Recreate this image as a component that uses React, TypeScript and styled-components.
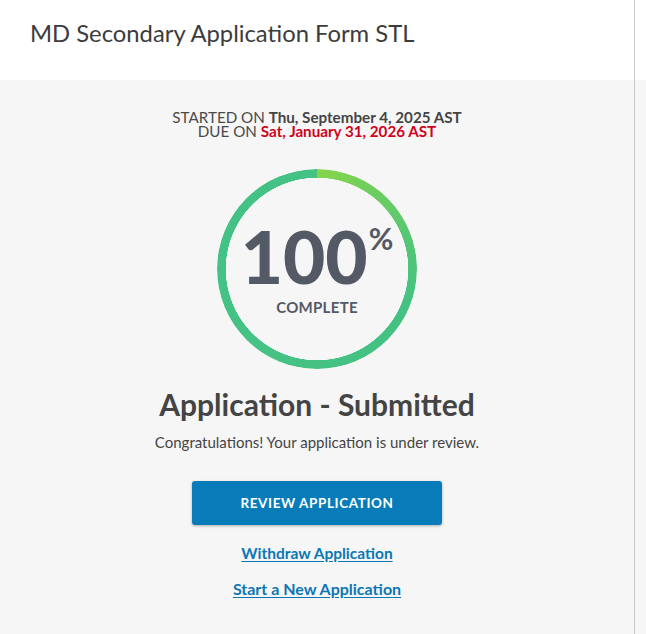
import React from "react";
import styled, { createGlobalStyle } from "styled-components";

const GlobalStyle = createGlobalStyle`
  html, body { margin: 0; padding: 0; }
  body {
    font-family: Lato, "Open Sans", Arial, sans-serif;
    background: #ffffff;
    -webkit-font-smoothing: antialiased;
  }
`;

const Page = styled.div`
  display: flex;
  width: 646px;
  height: 634px;
  overflow: hidden;
`;

const Main = styled.div`
  width: 634px;
  flex: none;
  display: flex;
  flex-direction: column;
  border-right: 1px solid #c9c9c9;
`;

const Side = styled.div`
  flex: 1;
  display: flex;
  flex-direction: column;
`;

const SideTop = styled.div`
  height: 80px;
  background: #ffffff;
`;

const SideBottom = styled.div`
  flex: 1;
  background: #f6f6f6;
`;

const Header = styled.header`
  height: 80px;
  box-sizing: border-box;
  padding: 17px 0 0 30px;
  background: #ffffff;
`;

const Title = styled.h1`
  margin: 0;
  font-size: 23.8px;
  font-weight: 400;
  color: #3c3c3c;
  line-height: 32px;
`;

const Content = styled.section`
  flex: 1;
  background: #f6f6f6;
  display: flex;
  flex-direction: column;
  align-items: center;
  padding-top: 30px;
`;

const Dates = styled.div`
  text-align: center;
  font-size: 15.2px;
  line-height: 14px;
  color: #4a4a4a;
`;

const DateLine = styled.div``;

const DateValue = styled.span<{ $due?: boolean }>`
  font-weight: 700;
  color: ${(p) => (p.$due ? "#d0021b" : "#444444")};
`;

const Ring = styled.div`
  position: relative;
  margin-top: 31px;
  width: 200px;
  height: 200px;
  display: flex;
  flex-direction: column;
  align-items: center;
  justify-content: center;
`;

const RingTrack = styled.div`
  position: absolute;
  inset: 0;
  border-radius: 50%;
  background: conic-gradient(from 0deg, #86d54b 0deg, #56c773 70deg, #45c282 110deg, #44c286 360deg);
  -webkit-mask: radial-gradient(farthest-side, transparent calc(100% - 9px), #000 calc(100% - 8.5px));
  mask: radial-gradient(farthest-side, transparent calc(100% - 9px), #000 calc(100% - 8.5px));
`;

const Percent = styled.div`
  display: flex;
  align-items: flex-start;
  color: #545966;
  font-weight: 900;
  margin-top: 1px;
`;

const Number = styled.span`
  font-size: 73px;
  line-height: 66px;
`;

const Sign = styled.span`
  font-size: 30px;
  line-height: 30px;
  font-weight: 700;
  margin-left: 1px;
`;

const Complete = styled.div`
  margin-top: 9px;
  font-size: 15px;
  font-weight: 700;
  color: #545966;
  letter-spacing: 0.3px;
`;

const Heading = styled.h2`
  margin: 18px 0 0;
  font-size: 30px;
  line-height: 34px;
  font-weight: 700;
  color: #444444;
`;

const Message = styled.p`
  margin: 12px 0 0;
  font-size: 15px;
  line-height: 18px;
  color: #444444;
`;

const PrimaryButton = styled.button`
  margin-top: 30px;
  width: 250px;
  height: 44px;
  border: none;
  border-radius: 3px;
  background: #087bb9;
  color: #ffffff;
  font-family: inherit;
  font-size: 13.5px;
  font-weight: 700;
  letter-spacing: 0.6px;
  box-shadow: 0 1px 3px rgba(0, 0, 0, 0.3);
  cursor: pointer;
`;

const TextLink = styled.a<{ $gap: number; $size: number }>`
  margin-top: ${(p) => p.$gap}px;
  font-size: ${(p) => p.$size}px;
  line-height: 20px;
  font-weight: 700;
  color: #0b77b5;
  text-decoration: underline;
  text-underline-offset: 2px;
  cursor: pointer;
`;

export default function App() {
  return (
    <>
      <GlobalStyle />
      <Page>
        <Main>
          <Header>
            <Title>MD Secondary Application Form STL</Title>
          </Header>
          <Content>
            <Dates>
              <DateLine>
                STARTED ON <DateValue>Thu, September 4, 2025 AST</DateValue>
              </DateLine>
              <DateLine>
                DUE ON <DateValue $due>Sat, January 31, 2026 AST</DateValue>
              </DateLine>
            </Dates>
            <Ring>
              <RingTrack />
              <Percent>
                <Number>100</Number>
                <Sign>%</Sign>
              </Percent>
              <Complete>COMPLETE</Complete>
            </Ring>
            <Heading>Application - Submitted</Heading>
            <Message>Congratulations! Your application is under review.</Message>
            <PrimaryButton>REVIEW APPLICATION</PrimaryButton>
            <TextLink $gap={18} $size={15.5}>Withdraw Application</TextLink>
            <TextLink $gap={16} $size={16}>Start a New Application</TextLink>
          </Content>
        </Main>
        <Side>
          <SideTop />
          <SideBottom />
        </Side>
      </Page>
    </>
  );
}
